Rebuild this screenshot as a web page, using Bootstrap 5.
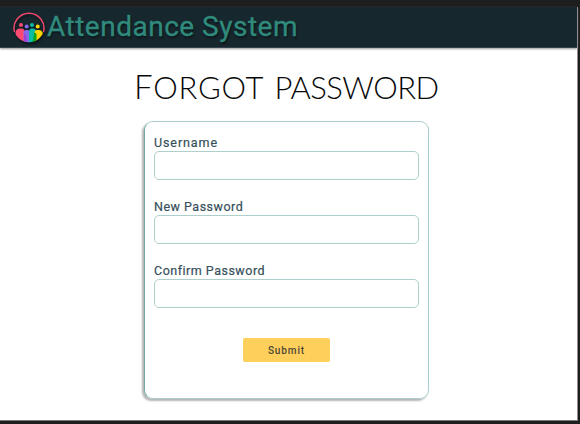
<!DOCTYPE html>
<html lang="en">
<head>
<meta charset="utf-8">
<meta name="viewport" content="width=device-width, initial-scale=1">
<title>Forgot password</title>
<link href="https://cdn.jsdelivr.net/npm/bootstrap@5.3.0/dist/css/bootstrap.min.css" rel="stylesheet">
<style>
body { background: #1e1e1e; font-family: Roboto, sans-serif; height: 424px; padding: 7px 2px 3px 0; overflow: hidden; }
.page { background: #fff; height: 414px; border-right: 1px solid #8d8d90; border-bottom: 1px solid #77777b; }
.topbar { height: 41px; background: #17272e; border-bottom: 1px solid #34434b; box-shadow: 0 1px 2px #9b969b; padding: 0 0 0 12px; }
.logo { width: 34px; height: 34px; filter: drop-shadow(1px 2px 1px #0b1519); }
.brand-name { color: #308b7d; font-size: 28px; line-height: 40px; letter-spacing: .5px; margin-left: 1px; text-shadow: 1px 2px 2px #0c171b; -webkit-text-stroke: .3px #308b7d; }
.title { font-family: Lato, sans-serif; font-weight: 300; font-size: 31px; line-height: 40px; color: #080808; text-transform: uppercase; margin: 18px 0 0 134px; }
.title-start { letter-spacing: .7px; }
.title-start::first-letter { font-size: 33px; }
.title-end { letter-spacing: -.5px; margin-left: 2px; }
.reset-card { width: 285px; height: 278px; margin: 14px 0 0 144px; padding: 13px 9px 0; border: 1px solid #a9cdca; border-left-color: #70aaa1; border-radius: 9px; box-shadow: -2px 2px 2px #b5b5b5; }
.field { height: 64px; }
.field .form-label { display: block; font-size: 12.5px; line-height: 16px; font-weight: 400; letter-spacing: .5px; color: #36505b; margin: 0; -webkit-text-stroke: .2px #36505b; }
.field:first-child .form-label { letter-spacing: .9px; }
.field .form-control { height: 29px; min-height: 0; padding: 2px 8px; border: 1px solid #aed0cc; border-radius: 5px; }
.submit { width: 87px; height: 24px; padding: 0; border: 0; border-radius: 2px; background: #ffcf5c; color: #4b4a36; font-size: 10px; font-weight: 500; letter-spacing: .9px; line-height: 23px; margin: 11px 0 0 89px; }
</style>
<script src="https://cdn.jsdelivr.net/npm/bootstrap@5.3.0/dist/js/bootstrap.bundle.min.js"></script>
</head>
<body>
<div class="page">
  <nav class="topbar navbar-brand d-flex align-items-center m-0">
    <svg class="logo" viewBox="0 0 34 34" aria-hidden="true">
      <defs><clipPath id="disc"><circle cx="17" cy="17" r="15.3"/></clipPath></defs>
      <path d="M2.500 22A15 15 0 1 1 31.500 22" fill="none" stroke="#ef476b" stroke-width="1.500"/>
      <g clip-path="url(#disc)">
        <path d="M3.500 34V22q1-3.500 4-3.500h2.500q2.500 0 2.500 4V34z" fill="#ff4a72"/>
        <path d="M11.500 34V23q0-3 2.500-3h1.500q2.500 0 2.500 3v11z" fill="#8568ec"/>
        <path d="M17 34V22q0-3.500 2.500-3.500h2q2.500 0 2.500 4V34z" fill="#0dbca5"/>
        <path d="M22.500 34V23q0-3 2.500-3h2q3 0 4 4v10z" fill="#ffd400"/>
        <path d="M12 23l2.500 3V34H12z" fill="#a33fd0"/>
        <path d="M22 22.500l2.500 1V34H19.500q2.500-4 2.500-11.500z" fill="#12a417"/>
      </g>
      <circle cx="9" cy="15" r="2" fill="#ff4a72"/><circle cx="14.700" cy="16.500" r="2" fill="#8568ec"/>
      <circle cx="20" cy="15" r="2" fill="#0dbca5"/><circle cx="25.700" cy="16.500" r="2" fill="#ffd400"/>
    </svg>
    <span class="brand-name">Attendance System</span>
  </nav>
  <h1 class="title text-nowrap"><span class="title-start d-inline-block">Forgot</span> <span class="title-end">password</span></h1>
  <form class="reset-card">
    <div class="field"><label class="form-label" for="user">Username</label><input class="form-control shadow-none" id="user" type="text"></div>
    <div class="field"><label class="form-label" for="pw">New Password</label><input class="form-control shadow-none" id="pw" type="password"></div>
    <div class="field"><label class="form-label" for="pw2">Confirm Password</label><input class="form-control shadow-none" id="pw2" type="password"></div>
    <button class="btn submit d-block" type="button">Submit</button>
  </form>
</div>
</body>
</html>
